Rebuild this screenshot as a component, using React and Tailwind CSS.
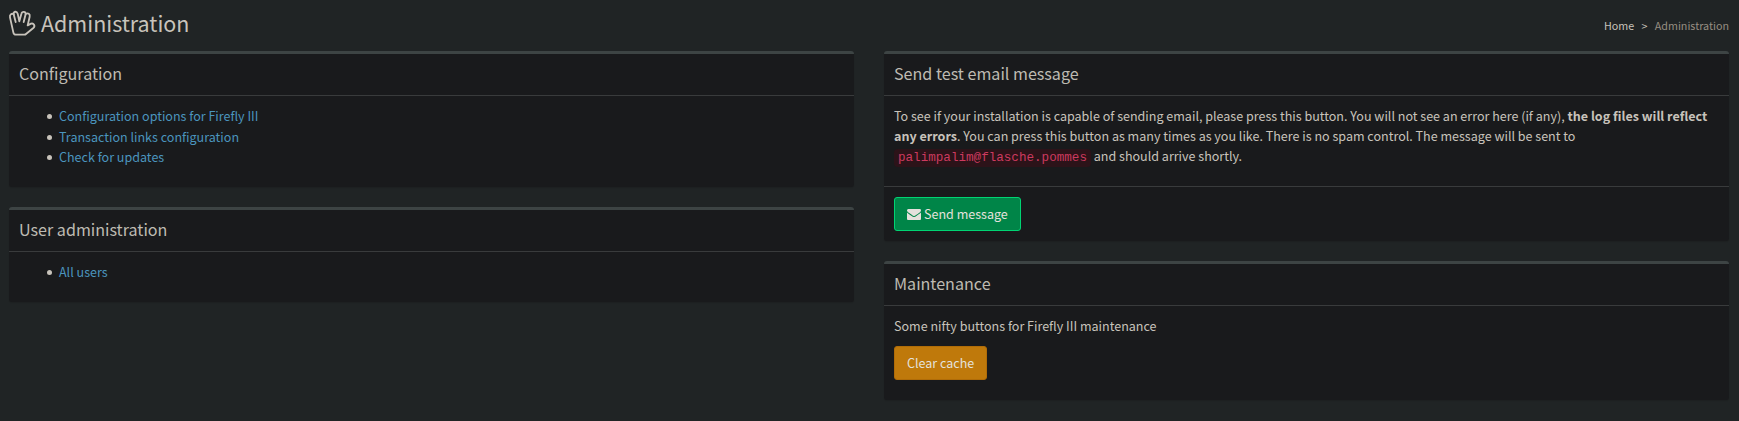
function Box({ title, children, footer }) {
  return (
    <section className="mb-5 w-full rounded-[3px] border-t-[3px] border-[#3d4444] bg-[#191a1c] shadow-[0_1px_1px_rgba(0,0,0,0.1)]">
      <h3 className="h-[42px] border-b border-[#393b3c] px-2.5 pt-[10px] text-[16.1px] leading-[18px] text-[#bebab2]">
        {title}
      </h3>
      <div className="p-2.5">{children}</div>
      {footer && <div className="border-t border-[#393b3c] p-2.5">{footer}</div>}
    </section>
  );
}

function LinkList({ items }) {
  return (
    <ul className="mb-2.5 pl-10">
      {items.map((item) => (
        <li key={item} className="relative not-last:first:mb-px before:absolute before:-left-3 before:top-[8px] before:size-[5px] before:rounded-full before:bg-[#c8c3bb]">
          <a href="#" className="text-[#4b95be]">{item}</a>
        </li>
      ))}
    </ul>
  );
}

function HandIcon() {
  return (
    <svg
      viewBox="0 0 78 78"
      className="mr-1.5 h-[26px] w-[26px] overflow-visible fill-none stroke-current stroke-[5.5]"
      strokeLinejoin="round"
      strokeLinecap="round"
      aria-hidden="true"
    >
      <path d="M13 67 L3 22 C1 13 9 9 14 13 C13 4 23 2 26 11 L31 34 L37 12 C39 3 50 4 50 12 C57 8 64 12 62 20 L56 46 L66 41 C74 38 80 48 73 54 L51 72 Q49 74 46 74 H21 Q14 74 13 67 Z" />
      <path d="M14 13 L20 36 M50 12 L44 36" />
    </svg>
  );
}

function EnvelopeIcon() {
  return (
    <svg viewBox="0 0 1792 1792" className="mr-[3px] h-3.5 w-3.5 fill-current" aria-hidden="true">
      <path d="M1792 710v794q0 66-47 113t-113 47h-1472q-66 0-113-47t-47-113v-794q44 49 101 87 362 246 497 345 57 42 92.5 65.5t94.5 48 110 24.5h2q51 0 110-24.5t94.5-48 92.5-65.5q170-123 498-345 57-39 100-87zm0-294q0 79-49 151t-122 123q-376 261-468 325-10 7-42.5 31t-54 38.5-52 32.5-57.5 27-50 9h-2q-23 0-50-9t-57.5-27-52-32.5-54-38.5-42.5-31q-91-64-262-182.5t-205-142.5q-62-42-117-115.5t-55-136.5q0-78 41.5-130t118.5-52h1472q65 0 112.5 47t47.5 113z" />
    </svg>
  );
}

export default function App() {
  return (
    <div className="h-[421px] overflow-hidden bg-[#202425] pl-[9px] pr-[10px] font-['Noto_Sans_CJK_SC',sans-serif] text-[12.54px] leading-5 text-[#c8c3bb]">
      <header className="flex h-[51px] items-start justify-between">
        <h1 className="flex items-center pt-[10px] text-[21.48px] leading-6">
          <HandIcon />
          Administration
        </h1>
        <nav className="flex pt-4 text-[10.74px] leading-5">
          <a href="#">Home</a>
          <span className="px-[7.3px]">&gt;</span>
          <span className="text-[#978e82]">Administration</span>
        </nav>
      </header>
      <main className="grid grid-cols-2 items-start gap-[30px]">
        <div>
          <Box title="Configuration">
            <LinkList items={["Configuration options for Firefly III", "Transaction links configuration", "Check for updates"]} />
          </Box>
          <Box title="User administration">
            <LinkList items={["All users"]} />
          </Box>
        </div>
        <div>
          <Box
            title="Send test email message"
            footer={
              <button className="flex h-[34px] items-center rounded-[3px] border border-[#00d473] bg-[#008548] px-3 text-[#e4e1dc]">
                <EnvelopeIcon />
                Send message
              </button>
            }
          >
            <p className="mb-2.5">
              To see if your installation is capable of sending email, please press this button. You will not see an error here (if any),{" "}
              <strong className="font-bold">the log files will reflect any errors</strong>. You can press this button as many times as you like. There is no spam control. The message will be sent to{" "}
              <code className="rounded bg-[#2c1319] px-1 py-0.5 font-['Liberation_Mono',monospace] text-[12.6px] leading-none text-[#cd3a5f]">palimpalim@flasche.pommes</code>{" "}
              and should arrive shortly.
            </p>
          </Box>
          <Box title="Maintenance">
            <p className="mb-2.5">Some nifty buttons for Firefly III maintenance</p>
            <button className="mb-2.5 flex h-[34px] items-center rounded-[3px] border border-[#b06c08] bg-[#bf790b] px-3 text-[#e4e1dc]">
              Clear cache
            </button>
          </Box>
        </div>
      </main>
    </div>
  );
}
